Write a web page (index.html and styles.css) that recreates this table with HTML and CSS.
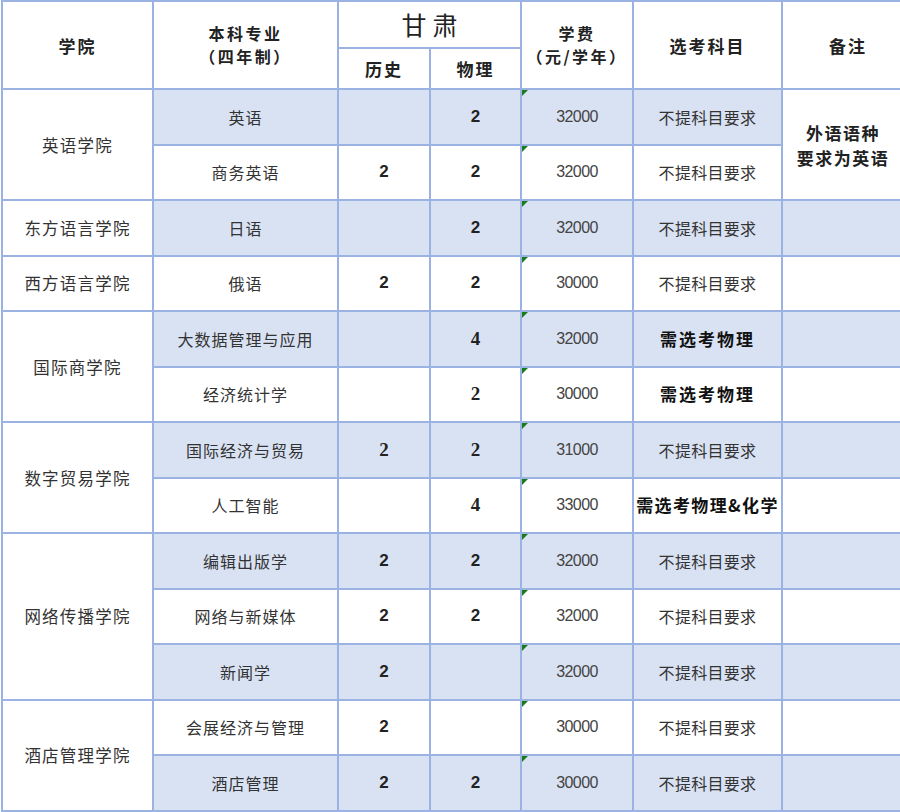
FILE: index.html
```html
<!DOCTYPE html>
<html lang="zh">
<head>
<meta charset="utf-8">
<title>招生计划</title>
<link rel="stylesheet" href="styles.css">
</head>
<body>
<table class="plan">
  <colgroup>
    <col class="c-college">
    <col class="c-major">
    <col class="c-hist">
    <col class="c-phys">
    <col class="c-fee">
    <col class="c-subj">
    <col class="c-note">
  </colgroup>
  <thead>
    <tr class="h1">
      <th rowspan="2">学院</th>
      <th rowspan="2" class="two">本科专业<br>（四年制）</th>
      <th colspan="2" class="prov">甘肃</th>
      <th rowspan="2" class="two">学费<br>（元/学年）</th>
      <th rowspan="2">选考科目</th>
      <th rowspan="2">备注</th>
    </tr>
    <tr class="h2">
      <th>历史</th>
      <th>物理</th>
    </tr>
  </thead>
  <tbody>
    <tr class="alt">
      <td rowspan="2" class="college">英语学院</td>
      <td>英语</td><td></td><td class="num">2</td>
      <td class="fee">32000</td><td class="subj">不提科目要求</td>
      <td rowspan="2" class="note">外语语种<br>要求为英语</td>
    </tr>
    <tr>
      <td>商务英语</td><td class="num">2</td><td class="num">2</td>
      <td class="fee">32000</td><td class="subj">不提科目要求</td>
    </tr>
    <tr class="alt">
      <td class="college">东方语言学院</td>
      <td>日语</td><td></td><td class="num">2</td>
      <td class="fee">32000</td><td class="subj">不提科目要求</td><td></td>
    </tr>
    <tr>
      <td class="college">西方语言学院</td>
      <td>俄语</td><td class="num">2</td><td class="num">2</td>
      <td class="fee">30000</td><td class="subj">不提科目要求</td><td></td>
    </tr>
    <tr class="alt">
      <td rowspan="2" class="college">国际商学院</td>
      <td>大数据管理与应用</td><td></td><td class="num serif">4</td>
      <td class="fee">32000</td><td class="req">需选考物理</td><td></td>
    </tr>
    <tr>
      <td>经济统计学</td><td></td><td class="num serif">2</td>
      <td class="fee">30000</td><td class="req">需选考物理</td><td></td>
    </tr>
    <tr class="alt">
      <td rowspan="2" class="college">数字贸易学院</td>
      <td>国际经济与贸易</td><td class="num serif">2</td><td class="num serif">2</td>
      <td class="fee">31000</td><td class="subj">不提科目要求</td><td></td>
    </tr>
    <tr>
      <td>人工智能</td><td></td><td class="num serif">4</td>
      <td class="fee">33000</td><td class="req tight">需选考物理&amp;化学</td><td></td>
    </tr>
    <tr class="alt">
      <td rowspan="3" class="college">网络传播学院</td>
      <td>编辑出版学</td><td class="num">2</td><td class="num">2</td>
      <td class="fee">32000</td><td class="subj">不提科目要求</td><td></td>
    </tr>
    <tr>
      <td>网络与新媒体</td><td class="num">2</td><td class="num">2</td>
      <td class="fee">32000</td><td class="subj">不提科目要求</td><td></td>
    </tr>
    <tr class="alt">
      <td>新闻学</td><td class="num">2</td><td></td>
      <td class="fee">32000</td><td class="subj">不提科目要求</td><td></td>
    </tr>
    <tr>
      <td rowspan="2" class="college">酒店管理学院</td>
      <td>会展经济与管理</td><td class="num">2</td><td></td>
      <td class="fee">30000</td><td class="subj">不提科目要求</td><td></td>
    </tr>
    <tr class="alt">
      <td>酒店管理</td><td class="num">2</td><td class="num">2</td>
      <td class="fee">30000</td><td class="subj">不提科目要求</td><td></td>
    </tr>
  </tbody>
</table>
</body>
</html>
```
FILE: styles.css
```css
html, body {
  margin: 0;
  padding: 0;
  background: #ffffff;
  overflow: hidden;
}

body {
  width: 900px;
  height: 812px;
  font-family: "Noto Sans CJK SC", "Noto Sans", sans-serif;
  color: #333333;
}

.plan {
  border-collapse: collapse;
  table-layout: fixed;
  width: 912px;
  margin-left: 1px;
  margin-top: 0;
}

.c-college { width: 151px; }
.c-major { width: 185px; }
.c-hist { width: 92px; }
.c-phys { width: 91px; }
.c-fee { width: 112px; }
.c-subj { width: 149px; }
.c-note { width: 132px; }

.plan th,
.plan td {
  border: 2px solid #9ab3e3;
  padding: 0;
  text-align: center;
  vertical-align: middle;
  background: #ffffff;
}

.plan th {
  font-weight: 700;
  font-size: 17px;
  line-height: 25px;
  letter-spacing: 2px;
  color: #222222;
}

.plan th.two {
  font-size: 16px;
  line-height: 23.5px;
  letter-spacing: 2.5px;
}

.h1 { height: 47px; }
.h2 { height: 41px; }

.plan th.prov {
  font-size: 25px;
  font-weight: 400;
  line-height: 37px;
  letter-spacing: 6px;
  padding-left: 6px;
  color: #222222;
}

.plan tbody tr { height: 55.5px; }

.plan td {
  font-size: 16px;
  line-height: 24px;
  letter-spacing: 1px;
}

.plan tr.alt td { background: #d9e2f3; }
.plan tr td.college,
.plan tr.alt td.college,
.plan tr.alt td.note { background: #ffffff; }

.plan td.college {
  font-size: 16.5px;
  letter-spacing: 1.2px;
}

.plan td.num {
  font-family: "Liberation Sans", Arial, sans-serif;
  font-weight: 700;
  font-size: 17px;
  color: #222222;
  letter-spacing: 0;
}

.plan td.num.serif {
  font-family: "Liberation Serif", "Times New Roman", serif;
  font-size: 19px;
}

.plan td.fee {
  position: relative;
  font-family: "Liberation Sans", Arial, sans-serif;
  font-size: 16px;
  letter-spacing: -0.6px;
  color: #444444;
}

.plan td.fee::before {
  content: "";
  position: absolute;
  left: 0;
  top: 0;
  width: 0;
  height: 0;
  border-top: 6px solid #1b7a1b;
  border-right: 6px solid transparent;
}

.plan td.subj {
  font-size: 16px;
  letter-spacing: 0.3px;
}

.plan td.req {
  font-weight: 700;
  font-size: 17px;
  letter-spacing: 2px;
  color: #111111;
}

.plan td.req.tight {
  letter-spacing: 1.4px;
  font-size: 17px;
}

.plan td.note {
  font-weight: 700;
  font-size: 17px;
  line-height: 25px;
  letter-spacing: 1.5px;
  color: #222222;
  padding-right: 10px;
}
```
